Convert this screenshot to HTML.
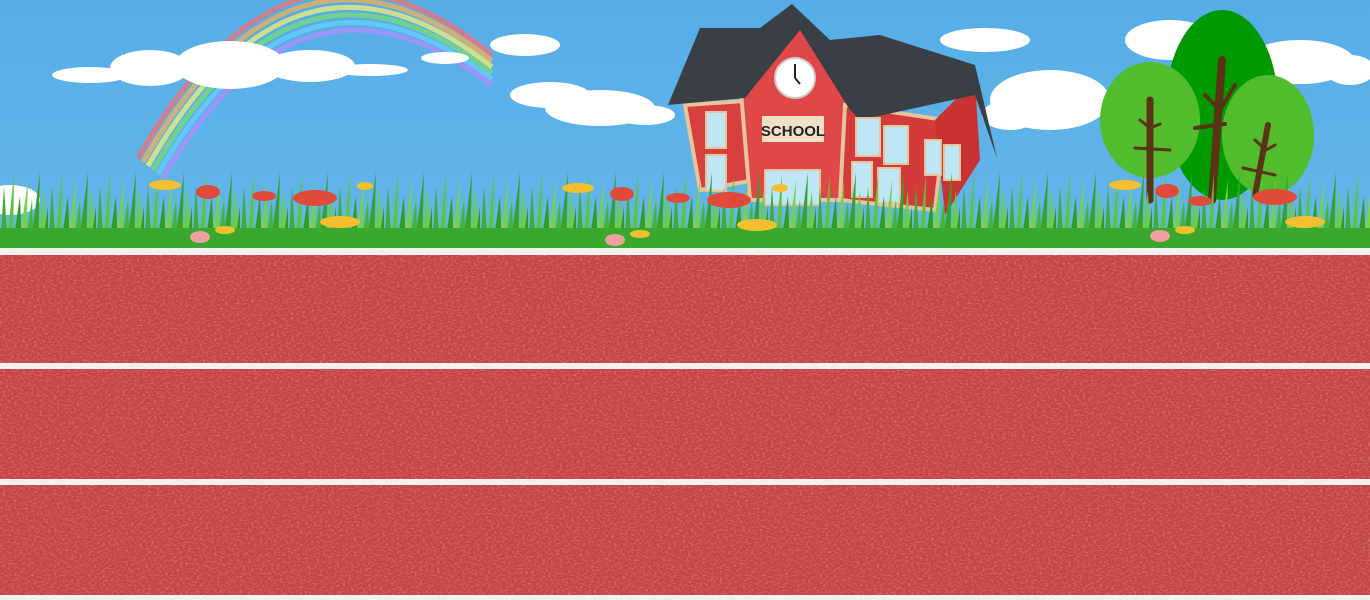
<!DOCTYPE html>
<html><head><meta charset="utf-8"><style>
html,body{margin:0;padding:0;width:1370px;height:600px;overflow:hidden;background:#5aaee6}
svg{display:block}
</style></head><body>
<svg width="1370" height="600" viewBox="0 0 1370 600" xmlns="http://www.w3.org/2000/svg">
<defs>
<linearGradient id="sky" x1="0" y1="0" x2="0" y2="1"><stop offset="0" stop-color="#56ade6"/><stop offset="1" stop-color="#64b6ea"/></linearGradient>
<filter id="tex" x="0" y="0" width="100%" height="100%">
<feTurbulence type="fractalNoise" baseFrequency="0.35 0.6" numOctaves="2" seed="3" result="n"/>
<feColorMatrix in="n" type="matrix" values="0 0 0 0 0.85  0 0 0 0 0.35  0 0 0 0 0.34  0 0 0 1.2 -0.55" result="c"/>
<feComposite in="c" in2="SourceGraphic" operator="in"/>
</filter>
<pattern id="grass" x="0" y="170" width="48" height="80" patternUnits="userSpaceOnUse">
<path d="M0 80 L4 16 L8 80Z" fill="#3fae2e"/>
<path d="M6 80 L14 4 L13 80Z" fill="#5cc43a"/>
<path d="M12 80 L20 26 L22 80Z" fill="#2e9a28"/>
<path d="M18 80 L28 10 L26 80Z" fill="#7ad24a"/>
<path d="M24 80 L32 30 L34 80Z" fill="#48b634"/>
<path d="M30 80 L40 2 L38 80Z" fill="#35a22c"/>
<path d="M36 80 L44 20 L46 80Z" fill="#6ccc40"/>
<path d="M42 80 L48 36 L50 80Z" fill="#2f9a27"/>
</pattern>
</defs>
<rect width="1370" height="250" fill="url(#sky)"/>
<g fill="none" stroke-width="5" opacity="0.7">
<path d="M138 158 Q290 -110 492 55" stroke="#ff6a6a"/>
<path d="M143 162 Q292 -100 492 61" stroke="#ffb24a"/>
<path d="M148 166 Q294 -90 492 67" stroke="#fff36a"/>
<path d="M153 170 Q296 -80 492 73" stroke="#7ee06a"/>
<path d="M158 174 Q298 -70 492 79" stroke="#6ad2ff"/>
<path d="M163 178 Q300 -60 492 85" stroke="#b48cff"/>
</g>
<g fill="#fff">
<ellipse cx="90" cy="75" rx="38" ry="8"/><ellipse cx="150" cy="68" rx="40" ry="18"/><ellipse cx="230" cy="65" rx="55" ry="24"/><ellipse cx="310" cy="66" rx="45" ry="16"/><ellipse cx="370" cy="70" rx="38" ry="6"/>
<ellipse cx="445" cy="58" rx="24" ry="6"/><ellipse cx="525" cy="45" rx="35" ry="11"/>
<ellipse cx="550" cy="95" rx="40" ry="13"/><ellipse cx="600" cy="108" rx="55" ry="18"/><ellipse cx="645" cy="115" rx="30" ry="10"/>
<ellipse cx="985" cy="40" rx="45" ry="12"/>
<ellipse cx="1050" cy="100" rx="60" ry="30"/><ellipse cx="1010" cy="115" rx="28" ry="15"/>
<ellipse cx="1170" cy="40" rx="45" ry="20"/><ellipse cx="1300" cy="62" rx="55" ry="22"/><ellipse cx="1350" cy="70" rx="25" ry="15"/>
<ellipse cx="10" cy="200" rx="30" ry="15"/>
</g>
<g>
<path d="M685 105 L760 100 L755 180 L700 190 Z" fill="#d84040" stroke="#e8c49a" stroke-width="4"/>
<path d="M740 80 L795 20 L850 90 L845 200 L750 200 Z" fill="#e04848" stroke="#e8c49a" stroke-width="4"/>
<path d="M845 105 L945 120 L935 210 L840 200 Z" fill="#d43a3a" stroke="#e8c49a" stroke-width="4"/>
<path d="M935 120 L975 80 L980 160 L945 215 Z" fill="#c83232"/>
<path d="M668 105 L700 28 L760 28 L792 4 L830 40 L880 35 L975 65 L997 158 L975 95 L860 120 L850 110 L800 30 L745 98 Z" fill="#3a3f46"/>
<circle cx="795" cy="78" r="20" fill="#fff" stroke="#ccc" stroke-width="2"/>
<path d="M795 78 L795 64 M795 78 L800 84" stroke="#222" stroke-width="2"/>
<rect x="762" y="116" width="62" height="26" fill="#f0e0c8"/>
<text x="793" y="136" font-family="Liberation Sans, sans-serif" font-size="15" font-weight="bold" text-anchor="middle" fill="#222">SCHOOL</text>
<g fill="#bfe6f7" stroke="#e8c49a" stroke-width="2">
<rect x="706" y="112" width="20" height="36"/><rect x="706" y="155" width="20" height="36"/>
<rect x="765" y="170" width="55" height="35"/>
<rect x="856" y="118" width="24" height="38"/><rect x="884" y="126" width="24" height="38"/>
<rect x="852" y="162" width="20" height="35"/><rect x="878" y="168" width="22" height="35"/>
<rect x="925" y="140" width="16" height="35"/><rect x="944" y="145" width="16" height="35"/>
</g>
</g>
<g>
<ellipse cx="1222" cy="105" rx="56" ry="95" fill="#009a00"/>
<ellipse cx="1150" cy="120" rx="50" ry="58" fill="#52bd2c"/>
<ellipse cx="1268" cy="135" rx="46" ry="60" fill="#52bd2c"/>
<g stroke="#5a3216" stroke-linecap="round" fill="none">
<path d="M1150 200 L1150 100" stroke-width="7"/><path d="M1135 148 L1170 150 M1140 120 L1150 128 L1160 124" stroke-width="3"/>
<path d="M1212 200 L1222 60" stroke-width="8"/><path d="M1195 128 L1225 124 M1205 95 L1220 110 L1235 85" stroke-width="4"/>
<path d="M1255 195 L1268 125" stroke-width="6"/><path d="M1243 168 L1275 175 M1255 140 L1266 150 L1275 145" stroke-width="3"/>
</g>
</g>
<rect x="0" y="170" width="1370" height="80" fill="url(#grass)"/>
<rect x="0" y="228" width="1370" height="20" fill="#3aa82e"/>
<g>
<g fill="#f4c030"><ellipse cx="165" cy="185" rx="16" ry="5"/><ellipse cx="578" cy="188" rx="16" ry="5"/><ellipse cx="1125" cy="185" rx="16" ry="5"/><ellipse cx="340" cy="222" rx="20" ry="6"/><ellipse cx="757" cy="225" rx="20" ry="6"/><ellipse cx="1305" cy="222" rx="20" ry="6"/><ellipse cx="365" cy="186" rx="8" ry="4"/><ellipse cx="780" cy="188" rx="8" ry="4"/><ellipse cx="640" cy="234" rx="10" ry="4"/><ellipse cx="225" cy="230" rx="10" ry="4"/><ellipse cx="1185" cy="230" rx="10" ry="4"/></g>
<g fill="#e04a3a"><ellipse cx="315" cy="198" rx="22" ry="8"/><ellipse cx="729" cy="200" rx="22" ry="8"/><ellipse cx="1275" cy="197" rx="22" ry="8"/><ellipse cx="208" cy="192" rx="12" ry="7"/><ellipse cx="622" cy="194" rx="12" ry="7"/><ellipse cx="1167" cy="191" rx="12" ry="7"/><ellipse cx="264" cy="196" rx="12" ry="5"/><ellipse cx="678" cy="198" rx="12" ry="5"/><ellipse cx="1200" cy="201" rx="12" ry="5"/></g>
<g fill="#f0a0a0"><ellipse cx="200" cy="237" rx="10" ry="6"/><ellipse cx="615" cy="240" rx="10" ry="6"/><ellipse cx="1160" cy="236" rx="10" ry="6"/></g>
</g>
<rect x="0" y="248" width="1370" height="352" fill="#c44644"/>
<rect x="0" y="255" width="1370" height="340" fill="#c44644" filter="url(#tex)"/>
<g fill="#f4f1f0">
<rect x="0" y="248" width="1370" height="7"/>
<rect x="0" y="363" width="1370" height="6"/>
<rect x="0" y="479" width="1370" height="6"/>
<rect x="0" y="595" width="1370" height="5"/>
</g>
</svg>
</body></html>
